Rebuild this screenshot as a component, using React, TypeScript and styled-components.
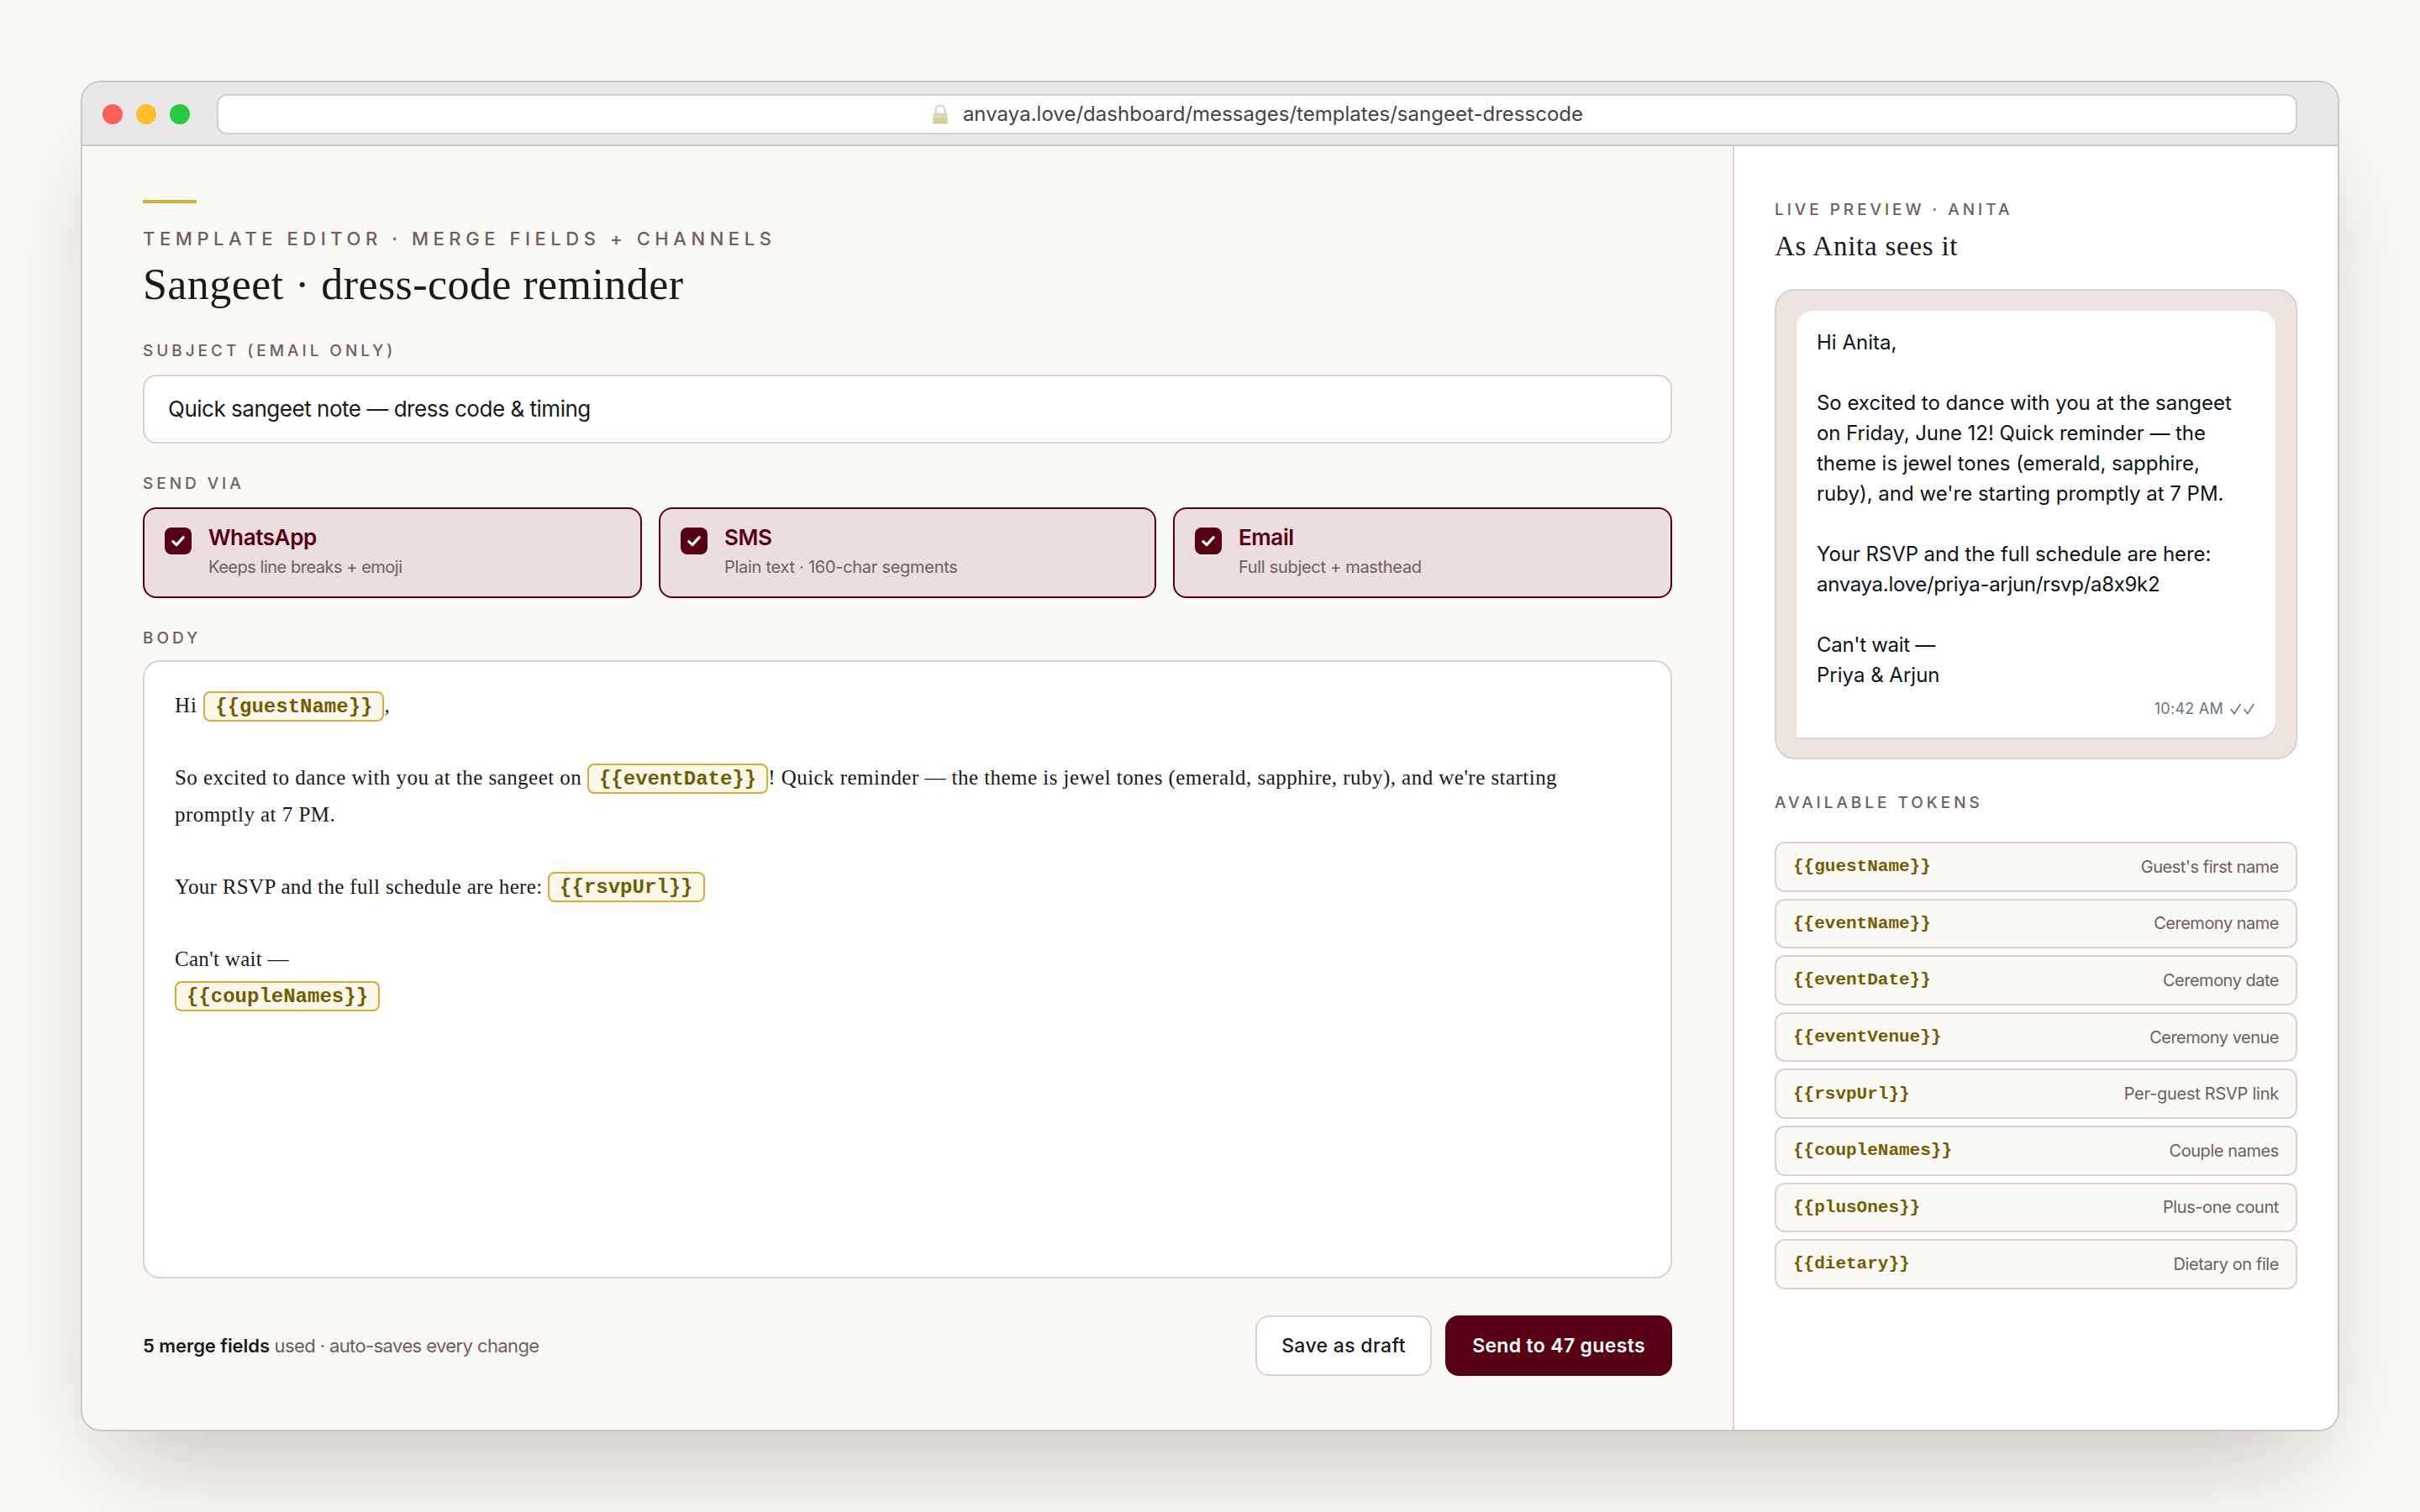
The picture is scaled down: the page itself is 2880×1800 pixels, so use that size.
import React from "react";
import styled, { createGlobalStyle } from "styled-components";

const sans = `Inter, "Liberation Sans", sans-serif`;
const serif = `"Liberation Serif", "Times New Roman", serif`;
const mono = `"Liberation Mono", "Courier New", monospace`;

const color = {
  cream: "#faf9f5",
  ink: "#1a1a1a",
  muted: "#705d5f",
  wine: "#570013",
  blush: "#ebdedf",
  line: "#e0cfd0",
  gold: "#d4af37",
  bronze: "#735c00",
};

const GlobalStyle = createGlobalStyle`
  *, *::before, *::after { box-sizing: border-box; }
  html, body { margin: 0; background: ${color.cream}; }
`;

const Page = styled.div`
  width: 2880px;
  height: 1800px;
  padding: 96px;
  overflow: hidden;
  background: ${color.cream};
  color: ${color.ink};
  font-family: ${sans};
`;

const Window = styled.div`
  display: flex;
  flex-direction: column;
  width: 100%;
  height: 100%;
  overflow: hidden;
  border: 2px solid #c8c8c8;
  border-radius: 24px;
  background: ${color.cream};
  box-shadow: 0 60px 120px -40px rgba(40, 10, 8, 0.26);
`;

const TitleBar = styled.header`
  display: flex;
  align-items: center;
  flex: none;
  height: 76px;
  padding: 2px 48px 0 24px;
  border-bottom: 2px solid #c8c8c8;
  background: #e8e8e8;
`;

const Lights = styled.div`
  display: flex;
  gap: 16px;
  margin-right: 32px;
`;

const Light = styled.span<{ $color: string }>`
  width: 24px;
  height: 24px;
  border-radius: 50%;
  background: ${(p) => p.$color};
`;

const AddressBar = styled.div`
  display: flex;
  align-items: center;
  justify-content: center;
  flex: 1;
  gap: 18px;
  height: 48px;
  padding-left: 2px;
  border: 2px solid #d0d0d0;
  border-radius: 12px;
  background: #fff;
  color: #444;
  font-size: 24px;
  line-height: 44px;
  letter-spacing: 0.02px;
`;

const Panes = styled.div`
  display: flex;
  flex: 1;
  min-height: 0;
`;

const Editor = styled.main`
  display: flex;
  flex-direction: column;
  flex: 1;
  padding: 64px 72px;
`;

const GoldRule = styled.div`
  width: 64px;
  height: 4px;
  background: ${color.gold};
`;

const Eyebrow = styled.div`
  margin-top: 24px;
  color: ${color.muted};
  font-size: 22px;
  font-weight: 500;
  line-height: 36px;
  letter-spacing: 5.56px;
`;

const Title = styled.h1`
  margin: 4px 0 0;
  font-family: ${serif};
  font-size: 52px;
  font-weight: 400;
  line-height: 65px;
  letter-spacing: 0.43px;
`;

const Label = styled.div<{ $top: number; $bottom: number }>`
  margin: ${(p) => p.$top}px 0 ${(p) => p.$bottom}px;
  color: ${color.muted};
  font-size: 19px;
  font-weight: 500;
  line-height: 25px;
  letter-spacing: 3.96px;
`;

const SubjectField = styled.div`
  height: 82px;
  padding: 0 28px;
  border: 2px solid ${color.line};
  border-radius: 16px;
  background: #fff;
  font-size: 26px;
  line-height: 78px;
  letter-spacing: -0.48px;
`;

const Channels = styled.div`
  display: grid;
  grid-template-columns: 594fr 592fr 594fr;
  gap: 20px;
`;

const ChannelCard = styled.div`
  display: flex;
  gap: 20px;
  height: 108px;
  padding: 18px 24px;
  border: 2px solid ${color.wine};
  border-radius: 16px;
  background: ${color.blush};
`;

const CheckBox = styled.span`
  display: flex;
  align-items: center;
  justify-content: center;
  flex: none;
  width: 32px;
  height: 32px;
  margin-top: 4px;
  border-radius: 8px;
  background: ${color.wine};
`;

const ChannelName = styled.div`
  color: ${color.wine};
  font-size: 26px;
  font-weight: 600;
  line-height: 32px;
  letter-spacing: -0.4px;
`;

const ChannelNote = styled.div<{ $track: number }>`
  margin-top: 5px;
  color: ${color.muted};
  font-size: 20px;
  line-height: 28px;
  letter-spacing: ${(p) => p.$track}px;
`;

const BodyField = styled.div`
  flex: 1;
  padding: 30px 36px;
  border: 2px solid ${color.line};
  border-radius: 20px;
  background: #fff;
  font-family: ${serif};
  font-size: 25px;
  line-height: 43.2px;
`;

const BodyLine = styled.div<{ $track?: number }>`
  min-height: 43.2px;
  white-space: nowrap;
  letter-spacing: ${(p) => p.$track ?? 0.46}px;
`;

const Chip = styled.code`
  padding: 2.5px 12px;
  border: 2px solid ${color.gold};
  border-radius: 8px;
  background: #fbf7eb;
  color: ${color.bronze};
  font-family: ${mono};
  font-size: 24px;
  font-weight: 700;
  line-height: 1;
  letter-spacing: 0;
  vertical-align: 1px;
`;

const Footer = styled.footer`
  display: flex;
  align-items: center;
  flex: none;
  gap: 16px;
  height: 72px;
  margin-top: 44px;
`;

const Status = styled.div`
  flex: 1;
  color: ${color.muted};
  font-size: 22px;
  letter-spacing: -0.6px;

  strong {
    color: ${color.ink};
    font-weight: 600;
    letter-spacing: -0.06px;
  }
`;

const Button = styled.button<{ $primary?: boolean; $width: number }>`
  width: ${(p) => p.$width}px;
  height: 72px;
  padding: 0;
  border: 2px solid ${(p) => (p.$primary ? color.wine : color.line)};
  border-radius: 16px;
  background: ${(p) => (p.$primary ? color.wine : "#fff")};
  color: ${(p) => (p.$primary ? "#fff" : color.ink)};
  font-family: ${sans};
  font-size: 23px;
  font-weight: ${(p) => (p.$primary ? 600 : 500)};
  letter-spacing: 0.33px;
`;

const Sidebar = styled.aside`
  flex: none;
  width: 720px;
  padding: 63px 48px;
  border-left: 2px solid ${color.line};
  background: #fff;
`;

const SideTitle = styled.h2`
  margin: 0 0 31px;
  font-family: ${serif};
  font-size: 33px;
  font-weight: 400;
  line-height: 40px;
  letter-spacing: 0.75px;
`;

const Phone = styled.div`
  height: 560px;
  padding: 24px;
  border: 2px solid ${color.line};
  border-radius: 24px;
  background: #ece5de;
`;

const Bubble = styled.div`
  height: 508px;
  padding: 20px 24px;
  border-radius: 20px 20px 20px 4px;
  background: #fff;
  box-shadow: 0 2px 2px rgba(0, 0, 0, 0.08);
  color: #0b141a;
  font-size: 24px;
  line-height: 36px;
`;

const BubbleLine = styled.div<{ $track?: number }>`
  min-height: 36px;
  white-space: nowrap;
  letter-spacing: ${(p) => p.$track ?? 0}px;
`;

const Stamp = styled.div`
  display: flex;
  align-items: center;
  justify-content: flex-end;
  gap: 8px;
  margin-top: 8px;
  color: #667781;
  font-size: 18px;
  line-height: 28px;
  letter-spacing: 0.25px;
`;

const TokenList = styled.div`
  display: flex;
  flex-direction: column;
  gap: 8px;
`;

const TokenRow = styled.div`
  display: flex;
  align-items: center;
  justify-content: space-between;
  height: 59.6px;
  padding: 0 20px;
  border: 2px solid ${color.line};
  border-radius: 12px;
  background: ${color.cream};
`;

const TokenName = styled.code`
  color: ${color.bronze};
  font-family: ${mono};
  font-size: 21px;
  font-weight: 700;
`;

const TokenNote = styled.span<{ $track?: number }>`
  color: ${color.muted};
  font-size: 20px;
  letter-spacing: ${(p) => p.$track ?? -0.5}px;
`;

const Lock = () => (
  <svg width="18" height="24" viewBox="0 0 18 24" fill="none">
    <path d="M3.6 11V7.2a5.4 5.4 0 0 1 10.8 0V11" stroke="#d3dbe2" strokeWidth="2.6" />
    <rect x="0.5" y="10.5" width="17" height="12.5" rx="1" fill="#ddd8ae" />
    <rect x="0.5" y="16.5" width="17" height="6.5" rx="1" fill="#d3cea2" />
    <rect x="0.5" y="21.8" width="17" height="1.2" rx="0.6" fill="#c9bd94" />
  </svg>
);

const Check = () => (
  <svg width="20" height="20" viewBox="0 0 20 20" fill="none">
    <path
      d="M3.8 10.6 8 14.6 16.2 5.6"
      stroke="#fff"
      strokeWidth="3.2"
      strokeLinecap="round"
      strokeLinejoin="round"
    />
  </svg>
);

const DoubleCheck = () => (
  <svg width="30" height="14" viewBox="0 0 30 14" fill="none" stroke="#667781" strokeWidth="1.6">
    <path d="M0.8 7.2 5 12.6 12.4 1" />
    <path d="M16.6 7.2 20.8 12.6 28.2 1" />
  </svg>
);

const channels = [
  { name: "WhatsApp", note: "Keeps line breaks + emoji", track: -0.48 },
  { name: "SMS", note: "Plain text · 160-char segments", track: -0.28 },
  { name: "Email", note: "Full subject + masthead", track: -0.31 },
];

const preview: [string, number?][] = [
  ["Hi Anita,"],
  [""],
  ["So excited to dance with you at the sangeet", -0.03],
  ["on Friday, June 12! Quick reminder — the", -0.07],
  ["theme is jewel tones (emerald, sapphire,", -0.03],
  ["ruby), and we're starting promptly at 7 PM."],
  [""],
  ["Your RSVP and the full schedule are here:", -0.07],
  ["anvaya.love/priya-arjun/rsvp/a8x9k2", -0.31],
  [""],
  ["Can't wait —", -0.3],
  ["Priya & Arjun"],
];

const tokens: [string, string, number?][] = [
  ["guestName", "Guest's first name", -0.45],
  ["eventName", "Ceremony name"],
  ["eventDate", "Ceremony date"],
  ["eventVenue", "Ceremony venue"],
  ["rsvpUrl", "Per-guest RSVP link", -0.25],
  ["coupleNames", "Couple names", -0.42],
  ["plusOnes", "Plus-one count", -0.42],
  ["dietary", "Dietary on file", -0.42],
];

export default function App() {
  return (
    <>
      <GlobalStyle />
      <Page>
        <Window>
          <TitleBar>
            <Lights>
              <Light $color="#ff5f57" />
              <Light $color="#febc2e" />
              <Light $color="#28c840" />
            </Lights>
            <AddressBar>
              <Lock />
              <span>anvaya.love/dashboard/messages/templates/sangeet-dresscode</span>
            </AddressBar>
          </TitleBar>
          <Panes>
            <Editor>
              <GoldRule />
              <Eyebrow>TEMPLATE EDITOR · MERGE FIELDS + CHANNELS</Eyebrow>
              <Title>Sangeet · dress-code reminder</Title>
              <Label $top={34} $bottom={16}>SUBJECT (EMAIL ONLY)</Label>
              <SubjectField>Quick sangeet note — dress code &amp; timing</SubjectField>
              <Label $top={35} $bottom={16}>SEND VIA</Label>
              <Channels>
                {channels.map((c) => (
                  <ChannelCard key={c.name}>
                    <CheckBox>
                      <Check />
                    </CheckBox>
                    <div>
                      <ChannelName>{c.name}</ChannelName>
                      <ChannelNote $track={c.track}>{c.note}</ChannelNote>
                    </div>
                  </ChannelCard>
                ))}
              </Channels>
              <Label $top={35} $bottom={14}>BODY</Label>
              <BodyField>
                <BodyLine $track={1}>
                  Hi <Chip>{"{{guestName}}"}</Chip>,
                </BodyLine>
                <BodyLine />
                <BodyLine>
                  So excited to dance with you at the sangeet on <Chip>{"{{eventDate}}"}</Chip>! Quick
                  reminder — the theme is jewel tones (emerald, sapphire, ruby), and we're starting
                </BodyLine>
                <BodyLine>promptly at 7 PM.</BodyLine>
                <BodyLine />
                <BodyLine $track={0.34}>
                  Your RSVP and the full schedule are here: <Chip>{"{{rsvpUrl}}"}</Chip>
                </BodyLine>
                <BodyLine />
                <BodyLine $track={0.3}>Can't wait —</BodyLine>
                <BodyLine>
                  <Chip>{"{{coupleNames}}"}</Chip>
                </BodyLine>
              </BodyField>
              <Footer>
                <Status>
                  <strong>5 merge fields</strong> used · auto-saves every change
                </Status>
                <Button $width={210}>Save as draft</Button>
                <Button $primary $width={270}>Send to 47 guests</Button>
              </Footer>
            </Editor>
            <Sidebar>
              <Label $top={0} $bottom={11}>LIVE PREVIEW · ANITA</Label>
              <SideTitle>As Anita sees it</SideTitle>
              <Phone>
                <Bubble>
                  {preview.map(([text, track], i) => (
                    <BubbleLine key={i} $track={track}>{text}</BubbleLine>
                  ))}
                  <Stamp>
                    10:42 AM
                    <DoubleCheck />
                  </Stamp>
                </Bubble>
              </Phone>
              <Label $top={39} $bottom={34}>AVAILABLE TOKENS</Label>
              <TokenList>
                {tokens.map(([name, note, track]) => (
                  <TokenRow key={name}>
                    <TokenName>{`{{${name}}}`}</TokenName>
                    <TokenNote $track={track}>{note}</TokenNote>
                  </TokenRow>
                ))}
              </TokenList>
            </Sidebar>
          </Panes>
        </Window>
      </Page>
    </>
  );
}
